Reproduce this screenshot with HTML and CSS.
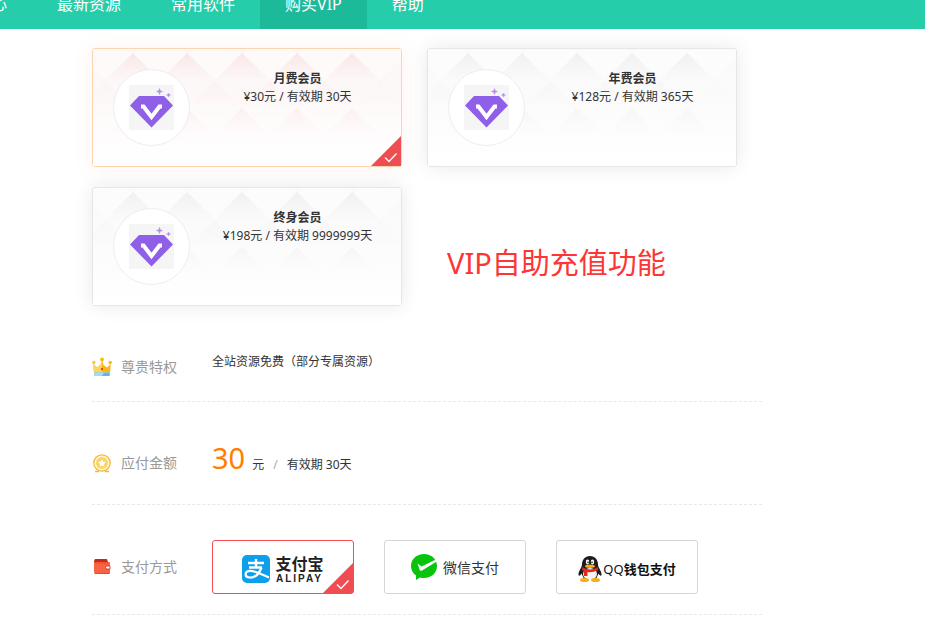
FILE: index.html
```html
<!DOCTYPE html>
<html lang="zh-CN">
<head>
<meta charset="utf-8">
<title>购买VIP</title>
<link rel="stylesheet" href="styles.css">
</head>
<body>
<svg class="sprite" aria-hidden="true">
  <defs>
    <linearGradient id="ramp" x1="0" y1="0" x2="0" y2="1">
      <stop offset="0" stop-color="#fff"/>
      <stop offset="1" stop-color="#000"/>
    </linearGradient>
    <mask id="facet" maskContentUnits="objectBoundingBox">
      <path fill="url(#ramp)" d="M0 0h1v1H0z"/>
    </mask>
    <linearGradient id="fade" x1="0" y1="0" x2="0" y2="1">
      <stop offset="0" stop-color="#fff" stop-opacity="0"/>
      <stop offset=".4" stop-color="#fff" stop-opacity=".2"/>
      <stop offset=".95" stop-color="#fff" stop-opacity="1"/>
    </linearGradient>
    <symbol id="diamond" viewBox="0 0 45 45">
      <path fill="#f5f5f5" d="M0 0h45v45H0z"/>
      <path fill="#8f5fe8" d="M10 11h25l9 9.500L22.500 42.500 1 20.500z"/>
      <path fill="none" stroke="#fff" stroke-width="4" d="M12 21.500h2.500l8 10.500 8-10.500H33"/>
      <path fill="#b78af0" d="M30.500 3.500l.8 2.200 2.200.8-2.200.8-.8 2.200-.8-2.200-2.200-.8 2.200-.8zM39.500 8l.6 1.400 1.400.6-1.400.6-.6 1.400-.6-1.400-1.400-.6 1.400-.6z" stroke="#b78af0" stroke-width=".5"/>
    </symbol>
    <symbol id="corner" viewBox="0 0 30 30">
      <path fill="#ee4e52" d="M30 0v30H0z"/>
      <path fill="none" stroke="#fff" stroke-width="1.300" d="M14 21.500l4 4 7.500-8"/>
    </symbol>
    <g id="facets" fill="currentColor">
      <path mask="url(#facet)" d="M40 4l28 28H12z"/>
      <path mask="url(#facet)" d="M94 4l28 28H66z"/>
      <path mask="url(#facet)" d="M149 4l28 28h-56z"/>
      <path mask="url(#facet)" d="M204 4l28 28h-56z"/>
      <path mask="url(#facet)" d="M259 4l28 28h-56z"/>
    </g>
    <symbol id="mosaic" viewBox="0 0 308 117">
      <path fill="currentColor" opacity=".3" d="M0 0h308v117H0z"/>
      <path fill="#fff" opacity=".4" d="M13 -22l27 26-27 27-27-27zM67 -22l27 26-27 27-27-27zM122 -22l27 26-27 27-27-27zM177 -22l27 26-27 27-27-27zM232 -22l27 26-27 27-27-27zM287 -22l27 26-27 27-27-27z"/>
      <use href="#facets"/>
      <use href="#facets" x="-27" y="28" opacity=".3"/>
      <use href="#facets" x="28" y="28" opacity=".2"/>
      <use href="#facets" y="55"/>
      <path fill="url(#fade)" d="M0 0h308v117H0z"/>
    </symbol>
  </defs>
</svg>

<header class="topbar">
  <nav class="nav">
    <a href="#">心</a>
    <a href="#">最新资源</a>
    <a href="#">常用软件</a>
    <a href="#" class="active" aria-current="page">购买VIP</a>
    <a href="#">帮助</a>
  </nav>
</header>

<main class="page">
  <section class="plans">
    <label class="plan">
      <input type="radio" name="plan" checked>
      <svg class="mosaic"><use href="#mosaic"/></svg>
      <span class="badge"><svg><use href="#diamond"/></svg></span>
      <span class="info"><b>月费会员</b><span>¥30元 / 有效期 30天</span></span>
      <svg class="corner"><use href="#corner"/></svg>
    </label>
    <label class="plan">
      <input type="radio" name="plan">
      <svg class="mosaic"><use href="#mosaic"/></svg>
      <span class="badge"><svg><use href="#diamond"/></svg></span>
      <span class="info"><b>年费会员</b><span>¥128元 / 有效期 365天</span></span>
      <svg class="corner"><use href="#corner"/></svg>
    </label>
    <label class="plan">
      <input type="radio" name="plan">
      <svg class="mosaic"><use href="#mosaic"/></svg>
      <span class="badge"><svg><use href="#diamond"/></svg></span>
      <span class="info"><b>终身会员</b><span>¥198元 / 有效期 9999999天</span></span>
      <svg class="corner"><use href="#corner"/></svg>
    </label>
    <p class="note">VIP自助充值功能</p>
  </section>

  <section class="row">
    <h2 class="label">
      <svg class="icon" viewBox="0 0 20 20">
        <path fill="#fdb714" d="M2 15.500L1.200 7 5 10.500 8.500 8 10 3l1.500 5 3.500 2.500L18.800 7 18 15.500z"/>
        <path fill="#ffd25a" d="M2 15.500L1.200 7 5 10.500 8.500 8 10 3v12.500z"/>
        <circle cx="10" cy="2.500" r="1.900" fill="#fdb714"/>
        <circle cx="1.800" cy="5.500" r="1.700" fill="#ffc62e"/>
        <circle cx="18.200" cy="5.500" r="1.700" fill="#fdb714"/>
        <path fill="#5fb4ea" d="M2 15.500h16L17.500 19h-15z"/>
        <path fill="#a5dafa" d="M2 15.500h10l-2 3.500H2.500z"/>
        <circle cx="10" cy="12" r="1.200" fill="#e8471c"/>
      </svg>尊贵特权
    </h2>
    <div class="value">全站资源免费（部分专属资源）</div>
  </section>

  <section class="row amount">
    <h2 class="label">
      <svg class="icon" viewBox="0 0 20 20">
        <path fill="none" stroke="#f5b83d" stroke-width="1.500" d="M3 18.500h4M13 18.500h4"/>
        <circle cx="10" cy="10" r="8.200" fill="#fff6d8" stroke="#f5b83d" stroke-width="1.300"/>
        <circle cx="10" cy="10" r="6" fill="#fdd45f"/>
        <path fill="#fff" d="M10 6.200l1.200 2.500 2.700.4-2 1.900.5 2.700-2.400-1.300-2.400 1.300.5-2.700-2-1.900 2.700-.4z"/>
      </svg>应付金额
    </h2>
    <div class="value"><strong class="price">30</strong>元<span class="slash">/</span>有效期 30天</div>
  </section>

  <section class="row payment">
    <h2 class="label">
      <svg class="icon" viewBox="0 0 20 20">
        <path fill="#c9281c" d="M3 2h12l1 3v3H2V4z"/>
        <path fill="#fb6243" d="M2 5h15q1 0 1 1v10q0 1-1 1H4q-2 0-2-2z"/>
        <path fill="none" stroke="#c93b26" stroke-width=".8" stroke-dasharray="2 1" d="M3 16.500h14M3 6h13"/>
        <path fill="#fff" stroke="#b83222" stroke-width=".8" d="M18 9h-3q-1.500 0-1.500 1.500T15 12h3z"/>
      </svg>支付方式
    </h2>
    <div class="methods">
      <label class="method">
        <input type="radio" name="pay" checked>
        <svg class="alipay-mark" viewBox="0 0 28 28">
          <rect width="28" height="28" rx="5" fill="#0d9fea"/>
          <path fill="none" stroke="#fff" stroke-width="2.400" d="M6 8h16M14 4v8M7 12.500h13"/>
          <path fill="none" stroke="#fff" stroke-width="2.200" d="M19.500 12.500C17 19 12.500 23 7.500 22.500 2 22 2.500 16 8 15.800 13 15.600 18 19 27 22.500"/>
        </svg>
        <span class="alipay-name"><b>支付宝</b><small>ALIPAY</small></span>
        <svg class="corner"><use href="#corner"/></svg>
      </label>
      <label class="method">
        <input type="radio" name="pay">
        <svg class="wechat-mark" viewBox="0 0 27 26">
          <path fill="#09c40c" d="M13 0c7.500 0 13 5 13 12s-5.500 12-13 12c-1.500 0-3-.2-4-.6L5 26v-4.500C2 19.500 0 16 0 12 0 5 5.500 0 13 0z"/>
          <path fill="#fff" d="M6.500 9.500l4 3L25 5.500l.8 2L11 16.500q-1.500.8-2.300-.6z"/>
        </svg>
        <span class="wechat-name">微信支付</span>
        <svg class="corner"><use href="#corner"/></svg>
      </label>
      <label class="method">
        <input type="radio" name="pay">
        <svg class="qq-mark" viewBox="0 0 24 26">
          <path fill="#1c1c1c" d="M12 0c5 0 8 4 8 8.500 0 3 4 7 3.500 10.500-.4 2-2.500-.5-3-1.500L18 23H6l-2.500-5.500C3 18.500 1 21 .5 19 0 15.500 4 11.500 4 8.500 4 4 7 0 12 0z"/>
          <ellipse cx="12" cy="18" rx="7" ry="6" fill="#f4f4f4"/>
          <ellipse cx="6.500" cy="24" rx="4.500" ry="2" fill="#f8ae17"/>
          <ellipse cx="17.500" cy="24" rx="4.500" ry="2" fill="#f8ae17"/>
          <ellipse cx="9.500" cy="6" rx="1.700" ry="2.400" fill="#fff"/>
          <ellipse cx="14.500" cy="6" rx="1.700" ry="2.400" fill="#fff"/>
          <circle cx="10" cy="6.300" r=".8"/><circle cx="14" cy="6.300" r=".8"/>
          <ellipse cx="12" cy="10.300" rx="5" ry="1.700" fill="#f8ae17"/>
          <path fill="#e4281e" d="M4.500 11q7.500 5 15 0l.8 3Q14 17 9.500 16v4H6v-5l-2-1z"/>
        </svg>
        <span class="qq-name">QQ<b>钱包支付</b></span>
        <svg class="corner"><use href="#corner"/></svg>
      </label>
    </div>
  </section>
</main>
</body>
</html>
```

FILE: styles.css
```css
* {
  box-sizing: border-box;
}

body {
  margin: 0;
  background: #fff;
  color: #333;
  font: 12px/18px "Noto Sans", "Noto Sans CJK SC", sans-serif;
}

.sprite {
  position: absolute;
  width: 0;
  height: 0;
}

input[type="radio"] {
  position: absolute;
  opacity: 0;
}

.topbar {
  overflow: hidden;
  background: #26cdab;
}

.nav {
  display: flex;
  margin: -20px 0 0 -34px;
}

.nav a {
  flex: none;
  padding: 0 25px;
  color: #fff;
  font-size: 16px;
  line-height: 49px;
  text-decoration: none;
}

.nav .active {
  background: #1dba9a;
}

.page {
  max-width: 762px;
  padding: 19px 0 20px 92px;
}

.plans {
  display: grid;
  grid-template-columns: 1fr 1fr;
  gap: 20px 25px;
  padding-right: 25px;
}

.plan {
  position: relative;
  display: flex;
  align-items: flex-start;
  padding: 20px 0;
  border: 1px solid #e6e6e6;
  border-radius: 3px;
  background: #fff;
  box-shadow: 0 0 20px rgba(0, 0, 0, 0.09);
  color: #333;
}

.plan:has(:checked) {
  border-color: #fcd5b0;
  box-shadow: 0 0 20px rgba(250, 130, 90, 0.1);
}

.mosaic {
  position: absolute;
  inset: 0;
  width: 100%;
  height: 100%;
  color: #f0f0f0;
}

.plan:has(:checked) .mosaic {
  color: #fae6e6;
}

.badge {
  position: relative;
  display: flex;
  flex: none;
  margin-left: 20px;
  padding: 15px;
  border: 1px solid #eee;
  border-radius: 50%;
  background: #fff;
}

.badge svg {
  width: 45px;
  height: 45px;
}

.info {
  position: relative;
  display: flex;
  flex: 1;
  flex-direction: column;
  padding: 1px 0 0 4px;
  text-align: center;
}

.corner {
  position: absolute;
  right: 0;
  bottom: 0;
  display: none;
  width: 30px;
  height: 30px;
}

:checked ~ .corner {
  display: block;
}

.note {
  margin: 0;
  padding: 56px 0 0 20px;
  color: #fd3535;
  font-size: 29px;
  line-height: 40px;
  white-space: nowrap;
}

.row {
  display: flex;
  align-items: flex-start;
  padding: 46px 0 19px;
  border-bottom: 1px dashed #e8e8e8;
}

.label {
  display: flex;
  flex: none;
  align-items: center;
  gap: 9px;
  width: 120px;
  margin: 0;
  color: #999;
  font-size: 14px;
  font-weight: 400;
  line-height: 30px;
}

.icon {
  width: 20px;
  height: 20px;
}

.value {
  line-height: 20px;
}

.amount {
  padding-bottom: 26px;
}

.price {
  margin-right: 7px;
  color: #ff7e00;
  font-size: 29px;
  font-weight: 400;
}

.slash {
  margin: 0 9px;
  color: #aaa;
}

.payment {
  align-items: center;
  padding: 35px 0 20px;
}

.methods {
  display: flex;
  gap: 30px;
}

.method {
  position: relative;
  display: flex;
  align-items: center;
  justify-content: center;
  width: 142px;
  height: 54px;
  border: 1px solid #d6d6d6;
  border-radius: 3px;
}

.method:has(:checked) {
  border-color: #f25055;
}

.alipay-mark {
  width: 28px;
  height: 28px;
  margin: 4px 5px 0 0;
}

.alipay-name {
  display: flex;
  flex-direction: column;
  align-items: center;
  padding-top: 4px;
  color: #222;
}

.alipay-name b {
  font-size: 16px;
  line-height: 20px;
}

.alipay-name small {
  font: bold 10px/10px "Liberation Sans", sans-serif;
  letter-spacing: 2px;
}

.wechat-mark {
  width: 27px;
  height: 26px;
  margin-right: 5px;
}

.wechat-name {
  padding-top: 2px;
  font-size: 14px;
}

.qq-mark {
  width: 24px;
  height: 26px;
  margin: 4px 1px 0 0;
}

.qq-name {
  padding-top: 4px;
  color: #111;
  font-size: 13px;
}
```
